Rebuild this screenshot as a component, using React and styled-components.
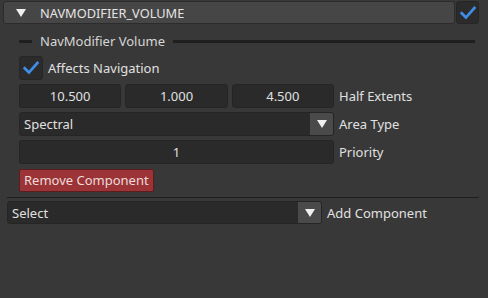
import React from "react";
import styled, { createGlobalStyle } from "styled-components";

const Global = createGlobalStyle`
  html, body { margin: 0; padding: 0; background: #383838; }
  body { width: 488px; height: 298px; overflow: hidden; font-family: "Noto Sans", "Open Sans", sans-serif; font-size: 13px; color: #e2e2e2; }
`;

const Panel = styled.div`
  display: flex;
  flex-direction: column;
  padding: 1px 9px 0 3px;
`;

const HeaderRow = styled.div`
  display: flex;
  gap: 1px;
  height: 23px;
`;

const Header = styled.div`
  flex: 1;
  display: flex;
  align-items: center;
  gap: 14px;
  padding-left: 12px;
  background: #464646;
  border: 1px solid #2c2c2c;
  border-radius: 3px;
  font-size: 12.8px;
  color: #e4e4e4;
`;

const Tri = styled.span`
  width: 0;
  height: 0;
  border-left: ${p => p.$s}px solid transparent;
  border-right: ${p => p.$s}px solid transparent;
  border-top: ${p => p.$s * 1.5}px solid #f0f0f0;
`;

const CheckBox = styled.div`
  width: ${p => p.$w}px;
  height: ${p => p.$h}px;
  flex: none;
  display: flex;
  align-items: center;
  justify-content: center;
  background: #2b2b2b;
  border: 1px solid #262626;
  border-radius: 3px;
  box-sizing: border-box;
`;

const Body = styled.div`
  display: flex;
  flex-direction: column;
  padding-left: 16px;
  gap: 4px;
`;

const GroupTitle = styled.div`
  display: flex;
  align-items: center;
  height: 20px;
  margin-top: 7px;
  margin-bottom: 1px;
  color: #d6d6d6;
  gap: 8px;
`;

const Line = styled.div`
  height: 3px;
  background: #1f1f1f;
  flex: ${p => (p.$grow ? 1 : "none")};
  width: ${p => (p.$grow ? "auto" : "13px")};
  margin-right: ${p => (p.$grow ? "4px" : "0")};
`;

const Row = styled.div`
  display: flex;
  align-items: center;
  height: 24px;
  gap: 5px;
`;

const Label = styled.span`
  color: #e0e0e0;
  white-space: nowrap;
`;

const Inputs = styled.div`
  display: grid;
  grid-template-columns: repeat(3, 1fr);
  gap: 4px;
  width: 315px;
  height: 24px;
`;

const Frame = styled.div`
  display: flex;
  align-items: center;
  justify-content: ${p => (p.$left ? "flex-start" : "center")};
  padding-left: ${p => (p.$left ? "5px" : "0")};
  height: 24px;
  width: ${p => (p.$w ? p.$w + "px" : "auto")};
  box-sizing: border-box;
  background: #2a2a2a;
  border: 1px solid #252525;
  border-radius: 3px;
  color: #e0e0e0;
`;

const Combo = styled.div`
  display: flex;
  height: ${p => p.$h}px;
  width: ${p => p.$w}px;
  box-sizing: border-box;
  background: #2a2a2a;
  border: 1px solid #252525;
  border-radius: 3px;
  overflow: hidden;
`;

const ComboText = styled.div`
  flex: 1;
  display: flex;
  align-items: center;
  padding-left: 4px;
  color: #e0e0e0;
`;

const ComboBtn = styled.div`
  width: 23px;
  display: flex;
  align-items: center;
  justify-content: center;
  background: #4a4a4a;
`;

const RedButton = styled.div`
  display: flex;
  align-items: center;
  height: 23px;
  box-sizing: border-box;
  padding: 0 4px;
  white-space: nowrap;
  background: #9c3336;
  border: 1px solid #5e1c1e;
  border-radius: 2px;
  color: #ecdcdc;
`;

const Separator = styled.div`
  height: 1px;
  background: #1e1e1e;
  margin: 5px 0 3px 4px;
`;

const Footer = styled.div`
  display: flex;
  align-items: center;
  gap: 5px;
  padding-left: 4px;
`;

const Check = ({ size = 14 }) => (
  <svg width={size} height={size} viewBox="0 0 14 14">
    <path d="M1.5 7.2 L5.2 11 L12.6 2.6" fill="none" stroke="#3f8de6" strokeWidth="2.4" strokeLinecap="square" />
  </svg>
);

export default function App() {
  return (
    <>
      <Global />
      <Panel>
        <HeaderRow>
          <Header>
            <Tri $s={5.5} />
            <span>NAVMODIFIER_VOLUME</span>
          </Header>
          <CheckBox $w={23} $h={23}>
            <Check size={16} />
          </CheckBox>
        </HeaderRow>
        <Body>
          <GroupTitle>
            <Line />
            <span>NavModifier Volume</span>
            <Line $grow />
          </GroupTitle>
          <Row>
            <CheckBox $w={24} $h={24}>
              <Check size={16} />
            </CheckBox>
            <Label>Affects Navigation</Label>
          </Row>
          <Row>
            <Inputs>
              <Frame>10.500</Frame>
              <Frame>1.000</Frame>
              <Frame>4.500</Frame>
            </Inputs>
            <Label>Half Extents</Label>
          </Row>
          <Row>
            <Combo $w={315} $h={24}>
              <ComboText>Spectral</ComboText>
              <ComboBtn><Tri $s={5.5} /></ComboBtn>
            </Combo>
            <Label>Area Type</Label>
          </Row>
          <Row>
            <Frame $w={315}>1</Frame>
            <Label>Priority</Label>
          </Row>
          <Row>
            <RedButton>Remove Component</RedButton>
          </Row>
        </Body>
        <Separator />
        <Footer>
          <Combo $w={315} $h={23}>
            <ComboText>Select</ComboText>
            <ComboBtn><Tri $s={5.5} /></ComboBtn>
          </Combo>
          <Label>Add Component</Label>
        </Footer>
      </Panel>
    </>
  );
}
